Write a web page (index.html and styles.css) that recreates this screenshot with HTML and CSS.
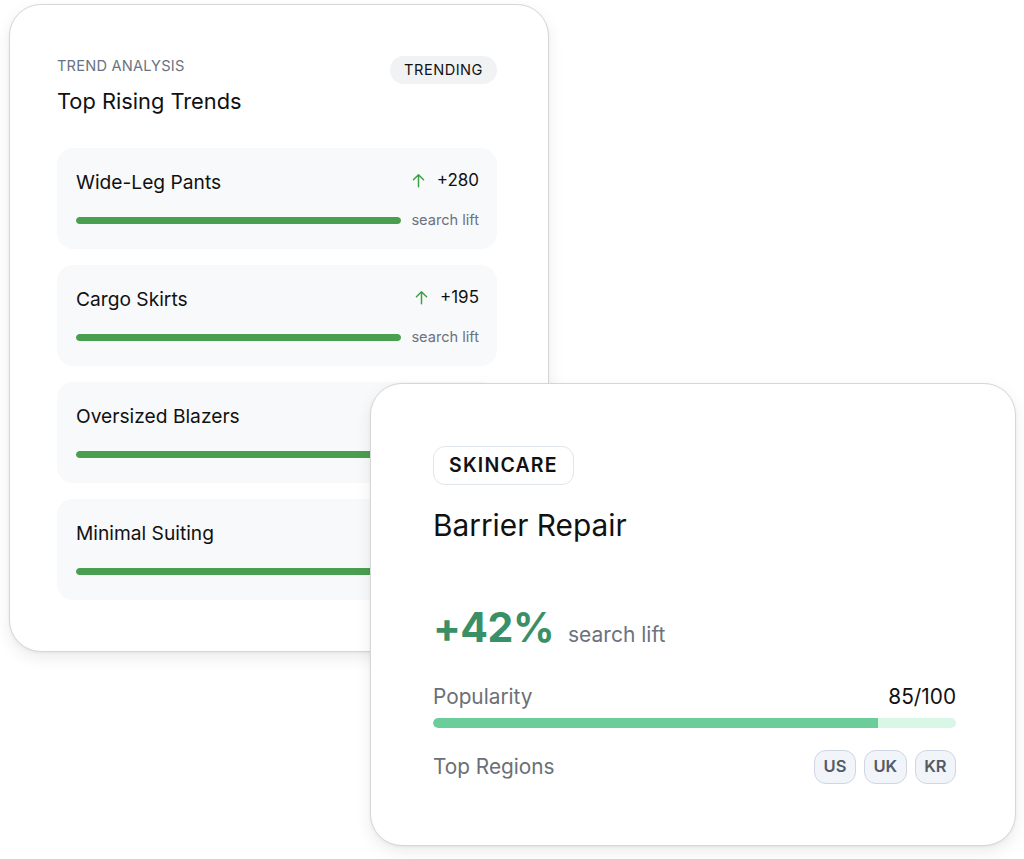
FILE: index.html
```html
<!DOCTYPE html>
<html lang="en">
<head>
<meta charset="utf-8">
<title>Trend Analysis</title>
<link rel="stylesheet" href="styles.css">
</head>
<body>
<div class="canvas">
  <section class="card trends">
    <header class="trends-head">
      <div>
        <div class="eyebrow">TREND ANALYSIS</div>
        <h2 class="trends-title">Top Rising Trends</h2>
      </div>
      <span class="pill">TRENDING</span>
    </header>
    <div class="trend-list">
      <div class="trend">
        <div class="trend-top">
          <span class="trend-name">Wide-Leg Pants</span>
          <span class="delta"><svg class="arrow" viewBox="0 0 14 14" width="15" height="15"><path d="M7 12.8V1.6M2.3 6.3L7 1.6l4.7 4.7" fill="none" stroke="#3f9f4a" stroke-width="1.4" stroke-linecap="round" stroke-linejoin="round"/></svg>+280</span>
        </div>
        <div class="trend-bottom">
          <div class="bar"><div class="bar-fill" style="width:100%"></div></div>
          <span class="lift">search lift</span>
        </div>
      </div>
      <div class="trend">
        <div class="trend-top">
          <span class="trend-name">Cargo Skirts</span>
          <span class="delta"><svg class="arrow" viewBox="0 0 14 14" width="15" height="15"><path d="M7 12.8V1.6M2.3 6.3L7 1.6l4.7 4.7" fill="none" stroke="#3f9f4a" stroke-width="1.4" stroke-linecap="round" stroke-linejoin="round"/></svg>+195</span>
        </div>
        <div class="trend-bottom">
          <div class="bar"><div class="bar-fill" style="width:100%"></div></div>
          <span class="lift">search lift</span>
        </div>
      </div>
      <div class="trend">
        <div class="trend-top">
          <span class="trend-name">Oversized Blazers</span>
        </div>
        <div class="trend-bottom">
          <div class="bar"><div class="bar-fill" style="width:100%"></div></div>
        </div>
      </div>
      <div class="trend">
        <div class="trend-top">
          <span class="trend-name">Minimal Suiting</span>
        </div>
        <div class="trend-bottom">
          <div class="bar"><div class="bar-fill" style="width:100%"></div></div>
        </div>
      </div>
    </div>
  </section>

  <section class="card detail">
    <span class="tag">SKINCARE</span>
    <h2 class="detail-title">Barrier Repair</h2>
    <div class="lift-row">
      <span class="big">+42%</span>
      <span class="lift-label">search lift</span>
    </div>
    <div class="pop-row">
      <span class="muted">Popularity</span>
      <span class="score">85/100</span>
    </div>
    <div class="pop-bar"><div class="pop-fill" style="width:85%"></div></div>
    <div class="regions-row">
      <span class="muted">Top Regions</span>
      <div class="chips">
        <span class="chip">US</span>
        <span class="chip">UK</span>
        <span class="chip">KR</span>
      </div>
    </div>
  </section>
</div>
</body>
</html>
```

FILE: styles.css
```css
* { box-sizing: border-box; }

html, body {
  margin: 0;
  padding: 0;
  background: #ffffff;
}

body {
  font-family: "Inter", "Noto Sans", "Liberation Sans", sans-serif;
  color: #111111;
}

.canvas {
  position: relative;
  width: 1024px;
  height: 859px;
  padding: 4px 0 0 9px;
}

.card {
  background: #ffffff;
  border: 1px solid #d6d6d8;
  border-radius: 32px;
  box-shadow: 0 6px 16px rgba(0, 0, 0, 0.08), 0 1px 3px rgba(0, 0, 0, 0.05);
}

/* Trends card */
.trends {
  width: 540px;
  height: 648px;
  padding: 51px 51px 0 47px;
}

.trends-head {
  display: flex;
  justify-content: space-between;
  align-items: flex-start;
}

.eyebrow {
  font-size: 14.6px;
  line-height: 20px;
  color: #6b7280;
  letter-spacing: 0.2px;
}

.trends-title {
  margin: 10px 0 0;
  font-size: 21.8px;
  line-height: 30px;
  font-weight: 400;
  color: #111111;
}

.pill {
  margin-top: 0;
  background: #f1f2f4;
  border-radius: 999px;
  padding: 0 14px;
  height: 28px;
  line-height: 28px;
  font-size: 14.6px;
  font-weight: 400;
  letter-spacing: 0.5px;
  color: #111111;
}

.trend-list {
  margin-top: 32px;
  display: flex;
  flex-direction: column;
  gap: 16px;
}

.trend {
  background: #f8f9fb;
  border-radius: 16px;
  padding: 20px 18px 18px 19px;
  height: 101px;
}

.trend-top {
  display: flex;
  justify-content: space-between;
  align-items: center;
  height: 28px;
}

.trend-name {
  font-size: 19.2px;
  line-height: 28px;
}

.delta {
  display: flex;
  align-items: center;
  gap: 11px;
  font-size: 17px;
  line-height: 24px;
  margin-top: -4px;
}

.arrow { display: block; }

.trend-bottom {
  margin-top: 14px;
  display: flex;
  align-items: center;
  gap: 10px;
  height: 20px;
}

.bar {
  flex: 1;
  height: 7px;
  border-radius: 4px;
  background: #e3efe3;
  overflow: hidden;
}

.bar-fill {
  height: 100%;
  background: #4a9e4f;
  border-radius: 4px;
}

.lift {
  font-size: 14.6px;
  line-height: 20px;
  color: #6b7280;
}

/* Detail card */
.detail {
  position: absolute;
  left: 370px;
  top: 383px;
  width: 646px;
  height: 463px;
  padding: 62px 59px 0 62px;
  z-index: 2;
}

.tag {
  display: inline-block;
  height: 39px;
  line-height: 36px;
  padding: 0 15px;
  border: 1.5px solid #e1e5ee;
  border-radius: 12px;
  font-size: 19.5px;
  font-weight: 600;
  letter-spacing: 1.2px;
  color: #111111;
}

.detail-title {
  margin: 22px 0 0;
  font-size: 29.8px;
  line-height: 36px;
  font-weight: 400;
  color: #111111;
}

.lift-row {
  margin-top: 59px;
  display: flex;
  align-items: baseline;
  gap: 14px;
  height: 50px;
}

.big {
  font-size: 41px;
  line-height: 50px;
  font-weight: 700;
  color: #3b8f66;
  letter-spacing: -0.5px;
}

.lift-label {
  font-size: 21px;
  color: #6b7280;
}

.pop-row {
  margin-top: 31px;
  display: flex;
  justify-content: space-between;
  align-items: center;
  height: 28px;
}

.muted {
  font-size: 20.8px;
  line-height: 28px;
  color: #6b6f76;
}

.score {
  font-size: 20.8px;
  line-height: 28px;
  color: #111111;
}

.pop-bar {
  margin-top: 7px;
  height: 10px;
  border-radius: 5px;
  background: #d9f7e6;
  overflow: hidden;
}

.pop-fill {
  height: 100%;
  background: #6bcd99;
  border-radius: 5px 0 0 5px;
}

.regions-row {
  margin-top: 22px;
  display: flex;
  justify-content: space-between;
  align-items: center;
  height: 34px;
}

.chips {
  display: flex;
  gap: 8px;
}

.chip {
  height: 34px;
  line-height: 31px;
  padding: 0 8.5px;
  border: 1.5px solid #cdd6e2;
  background: #f1f5f9;
  border-radius: 12px;
  font-size: 16.5px;
  font-weight: 600;
  color: #555b66;
}
```
